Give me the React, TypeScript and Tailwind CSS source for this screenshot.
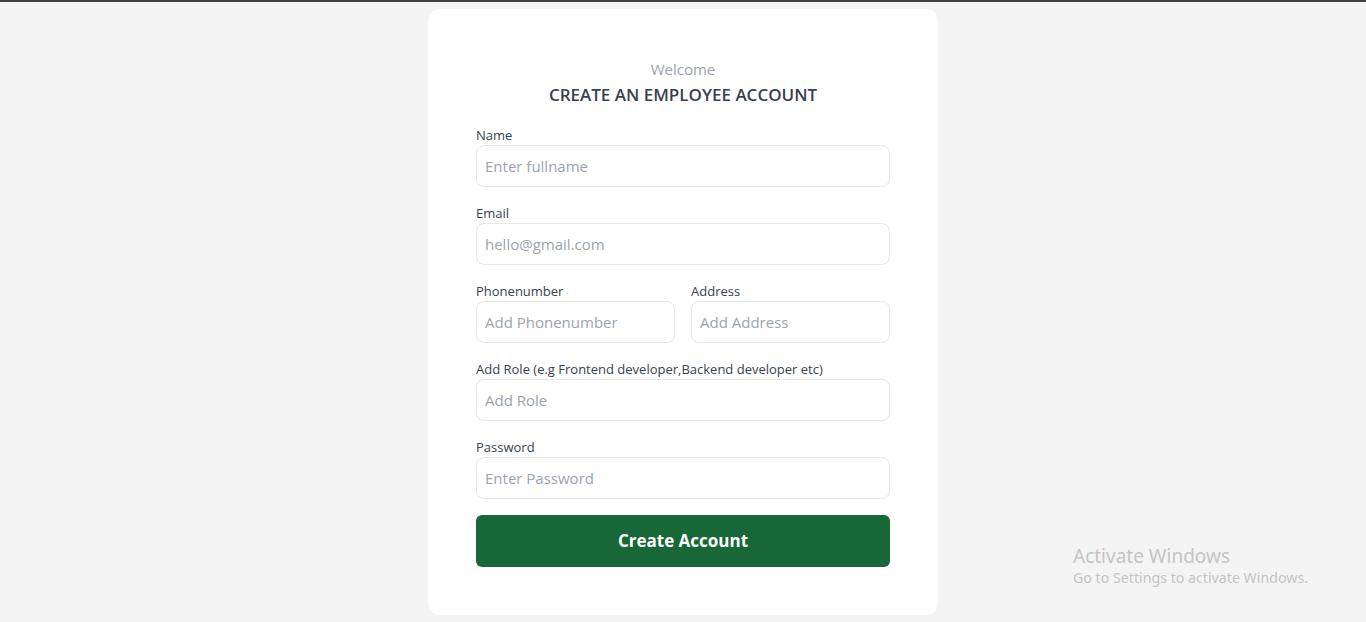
import React from 'react';

const FIELDS = [
  { id: 'name', label: 'Name', placeholder: 'Enter fullname' },
  { id: 'email', label: 'Email', placeholder: 'hello@gmail.com' },
];

const Field: React.FC<{ label: string; placeholder: string; type?: string }> = ({ label, placeholder, type = 'text' }) => (
  <div className="flex flex-col">
    <label className="text-[13px] leading-4 text-[#374151] mb-[2px]">{label}</label>
    <input
      type={type}
      placeholder={placeholder}
      className="h-[42px] w-full rounded-lg border border-[#e5e7eb] bg-white px-2 text-[15px] text-[#374151] placeholder:text-[#9ca3af] outline-none"
    />
  </div>
);

export default function App() {
  return (
    <div
      className="relative min-h-[622px] bg-[#f4f4f4] border-t-2 border-[#3f3f3f] flex justify-center pt-[7px]"
      style={{ fontFamily: '"Open Sans", "Noto Sans", sans-serif' }}
    >
      <div className="w-[510px] h-[606px] bg-white rounded-xl px-12 pt-[50px]">
        <div className="text-center">
          <p className="text-[15px] leading-5 text-[#9ca3af]">Welcome</p>
          <h1 className="mt-[4px] text-[17px] leading-6 font-semibold text-[#374151]">CREATE AN EMPLOYEE ACCOUNT</h1>
        </div>

        {/* Form */}
        <form className="mt-5 flex flex-col gap-[18px]">
          {FIELDS.map((f) => (
            <Field key={f.id} label={f.label} placeholder={f.placeholder} />
          ))}
          <div className="grid grid-cols-2 gap-4">
            <Field label="Phonenumber" placeholder="Add Phonenumber" />
            <Field label="Address" placeholder="Add Address" />
          </div>
          <Field label="Add Role (e.g Frontend developer,Backend developer etc)" placeholder="Add Role" />
          <Field label="Password" placeholder="Enter Password" type="password" />
          <button
            type="button"
            className="-mt-[2px] h-[52px] w-full rounded-md bg-[#176737] text-white text-[17px] font-bold"
          >
            Create Account
          </button>
        </form>
      </div>

      {/* Windows watermark */}
      <div className="absolute left-[1073px] top-[542px] text-[#c4c4c4] pointer-events-none" style={{ fontFamily: '"Noto Sans", sans-serif' }}>
        <p className="text-[19px] leading-6">Activate Windows</p>
        <p className="text-[14.2px] leading-5">Go to Settings to activate Windows.</p>
      </div>
    </div>
  );
}
